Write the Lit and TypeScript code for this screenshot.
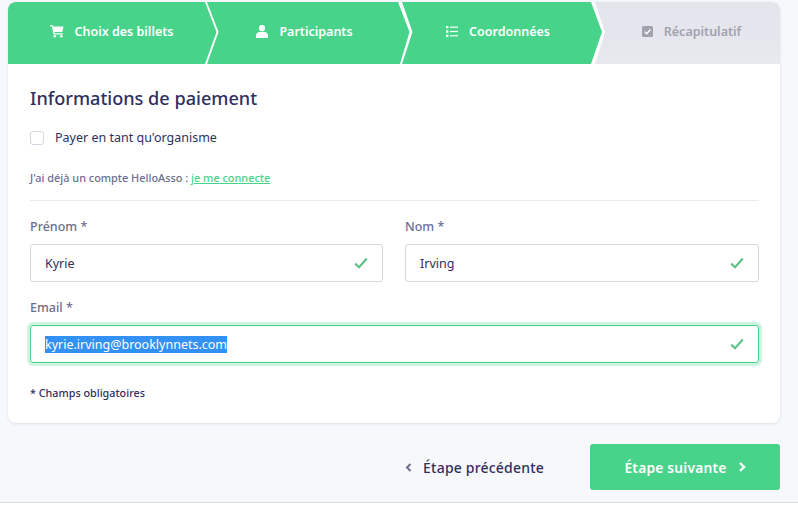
import { LitElement, html, css, svg } from "lit";
import { customElement } from "lit/decorators.js";

const check = svg`<svg class="check" viewBox="0 0 14 12" width="14" height="12"><path d="M1.2 6.6 L5 10.2 L12.8 1.6" fill="none" stroke="#5dc486" stroke-width="2.2"/></svg>`;

@customElement("app-root")
export class AppRoot extends LitElement {
  static styles = css`
    :host { display: block; font-family: "Noto Sans", sans-serif; color: #2e2f5e; }
    * { box-sizing: border-box; }
    .page { height: 503px; padding: 2px 18px 0 8px; background: #f7f8fc; border-bottom: 1px solid #dcdce2; }
    .card { height: 421px; background: #fff; border-radius: 8px; box-shadow: 0 1px 3px rgba(46,47,94,.12); overflow: hidden; }
    .steps { display: flex; height: 62px; background: #fff; }
    .step { display: flex; align-items: center; justify-content: center; gap: 11px; height: 62px; padding-bottom: 4px; background: #48d38a; color: #fff; font-size: 12.5px; font-weight: 600; }
    .s1 { width: 209px; padding-right: 2px; clip-path: polygon(0 0, 197px 0, 208.5px 30px, 197px 62px, 0 62px); }
    .s2 { width: 203px; margin-left: -10px; padding-right: 8px; clip-path: polygon(0 0, 191px 0, 202.5px 30px, 193px 62px, 0 62px, 11.5px 30px); }
    .s3 { width: 202px; margin-left: -10px; padding-right: 6px; clip-path: polygon(2px 0, 191px 0, 202px 30px, 191px 62px, 2px 62px, 12.5px 30px); }
    .s4 { width: 187px; margin-left: -9px; padding-left: 10px; color: #a1a1b0; background: linear-gradient(#e3e4ec, #e8e9ef); clip-path: polygon(2px 0, 100% 0, 100% 100%, 2px 100%, 12px 30px); }
    .body { padding: 22px 21px 0 22px; }
    h1 { margin: 0; font-size: 18.1px; line-height: 24px; font-weight: 500; color: #2e2f5e; }
    .org { display: flex; align-items: center; gap: 11px; margin-top: 19px; font-size: 12.5px; line-height: 18px; }
    .box { width: 14px; height: 14px; border: 1px solid #d5d7e0; border-radius: 3px; }
    .login { margin-top: 23px; font-size: 10.9px; line-height: 16px; font-weight: 500; color: #6d6e8f; padding-bottom: 14px; border-bottom: 1px solid #e9eaf0; }
    .login a { color: #48d38a; text-decoration: underline; }
    .row { display: grid; grid-template-columns: 353px 354px; gap: 22px; margin-top: 17px; }
    .field label { display: block; font-size: 12.5px; line-height: 18px; font-weight: 500; color: #6d6e8f; margin-bottom: 8px; }
    .email { margin-top: 17px; }
    .input { display: flex; align-items: center; justify-content: space-between; height: 38px; padding: 0 14px; border: 1px solid #d5d7e0; border-radius: 3px; font-size: 12.5px; color: #2e2f5e; background: #fff; }
    .focus { border-color: #48d38a; box-shadow: 0 0 0 3px #cff4e0; }
    .sel { background: #3390f5; color: #fff; }
    .note { margin-top: 22px; font-size: 10.8px; line-height: 16px; font-weight: 500; }
    .actions { display: flex; justify-content: flex-end; align-items: center; margin-top: 21px; }
    .prev, .next { display: flex; align-items: center; border: 0; font-family: inherit; font-size: 14px; font-weight: 500; letter-spacing: .2px; }
    .prev { gap: 11px; background: none; color: #2e2f5e; padding: 0; margin-right: 46px; }
    .next { justify-content: center; gap: 11px; width: 190px; height: 46px; background: #48d38a; color: #fff; border-radius: 3px; font-size: 13.8px; font-weight: 600; }
  `;

  render() {
    return html`<div class="page">
      <div class="card">
        <div class="steps">
          <div class="step s1">
            <svg width="14" height="14" viewBox="0 0 14 14"><path d="M0 1h2.6l.4 1.4h10.6l-1.3 5.6H4.4l.3 1.2h8.1v1.2H3.600L1.800 2.200H0z" fill="#fff"/><circle cx="4.800" cy="12.300" r="1.300" fill="#fff"/><circle cx="11.300" cy="12.300" r="1.300" fill="#fff"/></svg>
            <span>Choix des billets</span>
          </div>
          <div class="step s2">
            <svg width="12" height="13" viewBox="0 0 12 13"><circle cx="6" cy="3.200" r="3.100" fill="#fff"/><path d="M0 13v-2.400C0 8.500 1.700 7 3.600 7h4.800C10.300 7 12 8.500 12 10.600V13z" fill="#fff"/></svg>
            <span>Participants</span>
          </div>
          <div class="step s3">
            <svg width="12" height="11" viewBox="0 0 12 11"><g fill="#fff"><rect y="0" width="2.400" height="2.400"/><rect y="4.300" width="2.400" height="2.400"/><rect y="8.600" width="2.400" height="2.400"/><rect x="4" y=".6" width="8" height="1.200"/><rect x="4" y="4.900" width="8" height="1.200"/><rect x="4" y="9.200" width="8" height="1.200"/></g></svg>
            <span>Coordonnées</span>
          </div>
          <div class="step s4">
            <svg width="11" height="11" viewBox="0 0 11 11"><rect width="11" height="11" rx="1.500" fill="#a1a1b0"/><path d="M2.600 5.600 4.700 7.700 8.500 3.500" fill="none" stroke="#fff" stroke-width="1.300"/></svg>
            <span>Récapitulatif</span>
          </div>
        </div>
        <div class="body">
          <h1>Informations de paiement</h1>
          <div class="org"><span class="box"></span><span>Payer en tant qu'organisme</span></div>
          <div class="login">J'ai déjà un compte HelloAsso : <a>je me connecte</a></div>
          <div class="row">
            <div class="field"><label>Prénom *</label><div class="input"><span>Kyrie</span>${check}</div></div>
            <div class="field"><label>Nom *</label><div class="input"><span>Irving</span>${check}</div></div>
          </div>
          <div class="field email"><label>Email *</label><div class="input focus"><span class="sel">kyrie.irving@brooklynnets.com</span>${check}</div></div>
          <div class="note">* Champs obligatoires</div>
        </div>
      </div>
      <div class="actions">
        <button class="prev"><svg width="7" height="9" viewBox="0 0 7 9"><path d="M5.500 1 2 4.500 5.500 8" fill="none" stroke="#6d6e8f" stroke-width="2"/></svg>Étape précédente</button>
        <button class="next">Étape suivante<svg width="8" height="10" viewBox="0 0 8 10"><path d="M2 1 6 5 2 9" fill="none" stroke="#fff" stroke-width="2.400"/></svg></button>
      </div>
    </div>`;
  }
}
